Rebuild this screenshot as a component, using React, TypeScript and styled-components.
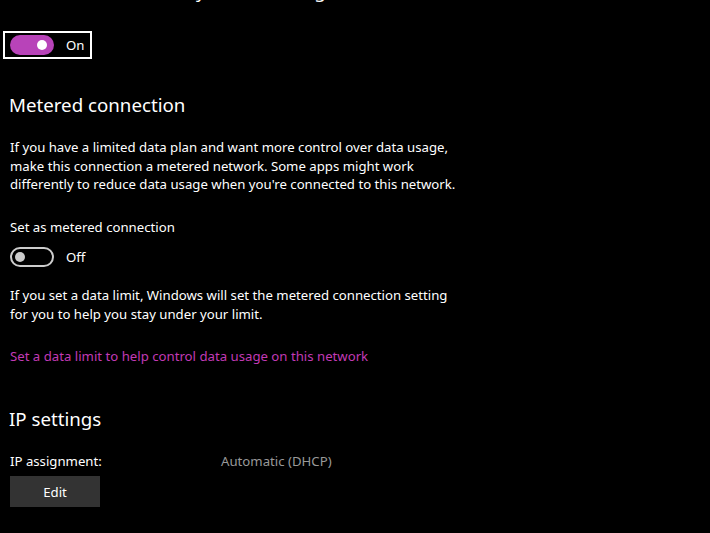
import React from "react";
import styled, { createGlobalStyle } from "styled-components";

const accent = "#b843b9";
const link = "#c23ab5";
const font = `"Segoe UI", "Noto Sans", "Open Sans", sans-serif`;

const Global = createGlobalStyle`
    html, body {
        margin: 0;
        background: #000;
        color: #fff;
        font-family: ${font};
        overflow: hidden;
    }
`;

const Page = styled.div`
    width: 710px;
    height: 533px;
    padding: 0 10px;
    box-sizing: border-box;
    display: flex;
    flex-direction: column;
    overflow: hidden;
`;

const CutTitle = styled.div`
    margin-top: -22px;
    font-size: 18.7px;
    line-height: 26px;
    height: 26px;
    color: #fff;
    white-space: nowrap;
`;

const Heading = styled.h2<{mt: number}>`
    margin: ${props => props.mt}px 0 0 -1px;
    font-size: 18.7px;
    font-weight: 400;
    line-height: 26px;
    color: #fff;
`;

const Text = styled.p<{mt: number, muted?: boolean}>`
    margin: ${props => props.mt}px 0 0;
    font-size: 13.2px;
    line-height: 18.5px;
    color: ${props => props.muted ? "#9a9a9a" : "#fff"};
`;

const FocusBox = styled.div`
    align-self: flex-start;
    margin: 27px 0 0 -7px;
    padding: 2px 6px 2px 5px;
    border: 2px solid #fff;
    display: flex;
    align-items: center;
`;

const ToggleRow = styled.div<{mt?: number}>`
    display: flex;
    align-items: center;
    gap: 12px;
    ${props => props.mt !== undefined && `margin-top: ${props.mt}px;`}
`;

const Pill = styled.div<{on?: boolean}>`
    width: 44px;
    height: 20px;
    box-sizing: border-box;
    border-radius: 10px;
    position: relative;
    background: ${props => props.on ? accent : "transparent"};
    border: ${props => props.on ? "none" : "2px solid #cccccc"};
`;

const Knob = styled.span<{on?: boolean}>`
    position: absolute;
    width: 10px;
    height: 10px;
    border-radius: 50%;
    top: ${props => props.on ? 5 : 3}px;
    ${props => props.on ? `right: 7px; background: #fff;` : `left: 3px; background: #cccccc;`}
`;

const ToggleLabel = styled.span`
    font-size: 13.2px;
    color: #fff;
`;

const Link = styled.a`
    margin-top: 24px;
    font-size: 13.2px;
    line-height: 18px;
    color: ${link};
    text-decoration: none;
`;

const InfoRow = styled.div`
    display: grid;
    grid-template-columns: 211px auto;
    margin-top: 20px;
    font-size: 13.2px;
    line-height: 18px;
`;

const Value = styled.span`
    color: #999999;
`;

const Button = styled.button`
    margin-top: 6px;
    width: 90px;
    height: 31px;
    border: none;
    background: #333333;
    color: #fff;
    font-family: ${font};
    font-size: 13.2px;
    padding: 0;
`;

function Toggle({on}: {on?: boolean}) {
    return (
        <ToggleRow>
            <Pill on={on}><Knob on={on} /></Pill>
            <ToggleLabel>{on ? "On" : "Off"}</ToggleLabel>
        </ToggleRow>
    );
}

export default function App() {
    return (
        <Page>
            <Global />
            <CutTitle>Connect automatically when in range</CutTitle>
            <FocusBox><Toggle on /></FocusBox>

            <Heading mt={33}>Metered connection</Heading>
            <Text mt={20}>
                If you have a limited data plan and want more control over data usage,<br />
                make this connection a metered network. Some apps might work<br />
                differently to reduce data usage when you're connected to this network.
            </Text>

            <Text mt={24}>Set as metered connection</Text>
            <ToggleRow mt={11}>
                <Pill><Knob /></Pill>
                <ToggleLabel>Off</ToggleLabel>
            </ToggleRow>

            <Text mt={19}>
                If you set a data limit, Windows will set the metered connection setting<br />
                for you to help you stay under your limit.
            </Text>

            <Link href="#">Set a data limit to help control data usage on this network</Link>

            <Heading mt={41}>IP settings</Heading>
            <InfoRow>
                <span>IP assignment:</span>
                <Value>Automatic (DHCP)</Value>
            </InfoRow>
            <Button>Edit</Button>
        </Page>
    );
}
